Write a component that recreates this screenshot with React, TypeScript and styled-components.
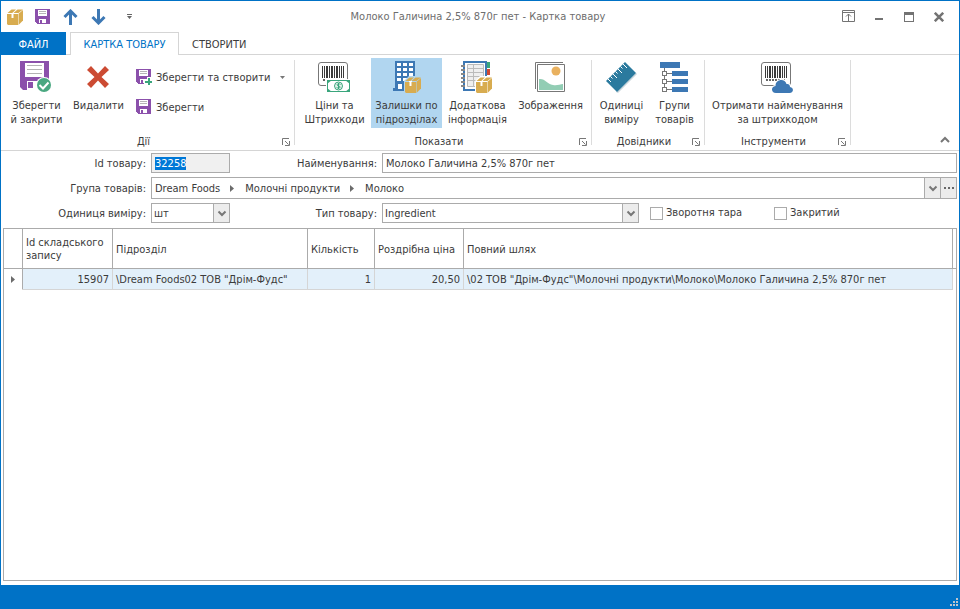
import React, { useEffect, useRef } from 'react';
import styled, { createGlobalStyle, css } from 'styled-components';

const BLUE = '#0072c6';
const LINE = '#ababab';
const SOFT = '#d5d5d5';
const INK = '#3b3b3b';

const GlobalStyle = createGlobalStyle`
  *, *::before, *::after { box-sizing: border-box; }
  body {
    margin: 0;
    background: #fff;
    color: ${INK};
    font: 11px/14px 'DejaVu Sans Condensed', 'Noto Sans', sans-serif;
  }
  button, input, select { font: inherit; color: inherit; }
`;

const Window = styled.div`
  display: flex;
  flex-direction: column;
  min-height: 100vh;
  border: 1px solid ${BLUE};
  border-bottom: 0;
`;

const PlainButton = styled.button`
  display: flex;
  align-items: center;
  justify-content: center;
  padding: 0;
  border: 0;
  background: none;
`;

/* ---------- title bar ---------- */
const TitleBar = styled.header`
  display: grid;
  grid-template-columns: 142px 1fr 146px;
  align-items: center;
  height: 31px;
`;
const QuickAccess = styled.div`
  display: flex;
  align-items: center;
  gap: 12px;
  padding-left: 6px;
`;
const QuickButton = styled(PlainButton)<{ $width?: number }>`
  width: ${p => p.$width || 16}px;
  height: 16px;
`;
const WindowTitle = styled.h1`
  margin: 0;
  font-size: 11px;
  font-weight: normal;
  text-align: center;
  white-space: nowrap;
  color: #6d6d6d;
`;
const WindowControls = styled.div`
  display: flex;
  justify-content: flex-end;
  gap: 14px;
  padding-right: 12px;
`;
const ControlButton = styled(PlainButton)`
  width: 16px;
  height: 16px;
`;

/* ---------- tabs ---------- */
const TabBar = styled.nav`
  display: flex;
  height: 23px;
  box-shadow: inset 0 -1px ${SOFT};
`;
const Tab = styled.button<{ $kind?: 'file' | 'active' }>`
  height: 23px;
  padding: 1px 12px 0;
  border: 1px solid transparent;
  border-bottom: 0;
  background: none;
  white-space: nowrap;
  ${p => p.$kind === 'file' && css`
    width: 65px;
    margin-right: 4px;
    background: ${BLUE};
    color: #fff;
  `}
  ${p => p.$kind === 'active' && css`
    width: 109px;
    padding: 1px 0 0;
    background: #fff;
    border-color: ${SOFT};
    color: ${BLUE};
  `}
`;

/* ---------- ribbon ---------- */
const Ribbon = styled.section`
  display: flex;
  height: 96px;
  border-bottom: 1px solid ${SOFT};
`;
const Group = styled.div<{ $width: number }>`
  display: flex;
  flex-direction: column;
  width: ${p => p.$width}px;
  padding-top: 3px;
  background: linear-gradient(#dcdcdc, #dcdcdc) right 5px / 1px 85px no-repeat;
`;
const GroupBody = styled.div`
  display: flex;
  flex: 1;
  gap: 1px;
  padding: 0 4px;
`;
const GroupFooter = styled.div`
  display: flex;
  align-items: center;
  height: 17px;
  padding: 0 5px 0 4px;
`;
const GroupCaption = styled.span`
  flex: 1;
  text-align: center;
`;
const Launcher = styled(PlainButton)`
  width: 8px;
  height: 8px;
`;
const LargeButton = styled.button<{ $width: number; $checked?: boolean }>`
  display: flex;
  flex-direction: column;
  align-items: center;
  width: ${p => p.$width}px;
  height: 70px;
  padding: 3px 0 0;
  gap: 6px;
  border: 0;
  background: ${p => (p.$checked ? '#b1d6f0' : 'none')};
  text-align: center;
  white-space: pre;
  svg { margin-right: 1px; }
`;
const SmallColumn = styled.div`
  display: flex;
  flex-direction: column;
  gap: 14px;
  padding: 11px 0 0 7px;
`;
const SmallButton = styled(PlainButton)`
  justify-content: flex-start;
  gap: 4px;
  height: 16px;
  white-space: nowrap;
`;
const SmallText = styled.span`
  padding-top: 2px;
`;
const SplitRow = styled.div`
  display: flex;
  gap: 10px;
`;
const CollapseButton = styled(PlainButton)`
  align-self: flex-end;
  width: 12px;
  height: 8px;
  margin: 0 8px 7px auto;
`;

/* ---------- form ---------- */
const Form = styled.form`
  display: flex;
  flex-direction: column;
  gap: 4px;
  padding: 2px 2px 5px 2px;
`;
const FormRow = styled.div`
  display: flex;
  align-items: center;
`;
const FieldLabel = styled.label<{ $width: number }>`
  width: ${p => p.$width}px;
  padding: 2px 5px 0 0;
  text-align: right;
  white-space: nowrap;
`;
const frame = css`
  height: 20px;
  border: 1px solid ${LINE};
  border-radius: 0;
  background: #fff;
  outline: none;
`;
const TextField = styled.input<{ $width?: number }>`
  ${frame}
  flex: ${p => (p.$width ? `0 0 ${p.$width}px` : 1)};
  width: ${p => (p.$width ? `${p.$width}px` : 'auto')};
  min-width: 0;
  padding: 0 3px;
  &:read-only { background: #f0f0f0; }
  &::selection { background: #0078d7; color: #fff; }
`;
const Combo = styled.div<{ $width: number }>`
  ${frame}
  display: grid;
  grid-template-columns: 1fr 16px;
  width: ${p => p.$width}px;
`;
const ComboSelect = styled.select`
  grid-area: 1 / 1 / 2 / 3;
  width: 100%;
  min-width: 0;
  padding: 1px 18px 0 2px;
  border: 0;
  appearance: none;
  background: none;
  outline: none;
`;
const ComboArrow = styled.span`
  grid-area: 1 / 2;
  display: flex;
  align-items: center;
  justify-content: center;
  border-left: 1px solid ${LINE};
  background: #ececec;
  pointer-events: none;
`;
const PathField = styled.div`
  ${frame}
  display: flex;
  flex: 1;
  height: 22px;
`;
const Crumbs = styled.div`
  display: flex;
  flex: 1;
  align-items: center;
  gap: 10px;
  padding-left: 3px;
`;
const Crumb = styled(PlainButton)`
  padding-top: 1px;
`;
const FieldButton = styled(PlainButton)`
  width: 16px;
  border-left: 1px solid ${LINE};
  background: #ececec;
`;
const CheckLabel = styled.label`
  display: flex;
  align-items: center;
  gap: 3px;
  width: 124px;
  white-space: nowrap;
`;
const CheckBox = styled.input`
  width: 13px;
  height: 13px;
  margin: 0;
  border: 1px solid ${LINE};
  appearance: none;
  background: #fff;
`;
const Checks = styled.div`
  display: flex;
  padding-left: 11px;
`;

/* ---------- grid ---------- */
const GridFrame = styled.main`
  flex: 1;
  margin: 0 2px 4px;
  padding-right: 3px;
  border: 1px solid ${LINE};
  background: linear-gradient(${LINE}, ${LINE}) 0 39px / 100% 1px no-repeat;
`;
const Table = styled.table`
  width: 100%;
  table-layout: fixed;
  border-spacing: 0;
`;
const Head = styled.th`
  height: 40px;
  padding: 1px 3px 0;
  border: solid ${LINE};
  border-width: 0 1px 1px 0;
  font-weight: normal;
  line-height: 13px;
  text-align: left;
`;
const Cell = styled.td<{ $align?: string; $marker?: boolean }>`
  height: 21px;
  padding: 2px 3px 0;
  overflow: hidden;
  border: solid ${SOFT};
  border-width: 0 1px 1px 0;
  background: #e3f0fa;
  text-align: ${p => p.$align || 'left'};
  white-space: nowrap;
  ${p => p.$marker && css`
    padding: 0;
    background: #fff;
    border-bottom-color: #fff;
    border-right-color: ${LINE};
    text-align: center;
    svg { display: block; margin: 0 auto; }
  `}
`;

const StatusBar = styled.footer`
  display: flex;
  align-items: flex-end;
  justify-content: flex-end;
  height: 24px;
  padding: 0 1px 3px;
  background: ${BLUE};
`;

/* ---------- drawings ---------- */
const PURPLE = '#8b50ab';
const GOLD = '#d8ac50';
const STEEL = '#3d78b4';
const GREEN = '#3aa57c';

const FloppyShape = () => (
  <g>
    <path fill={PURPLE} d="M0 0h15v15h-13l-2-2z" />
    <path fill="#fff" d="M3 0h9v7h-9zM4 10h7v4h-7z" />
    <path fill={PURPLE} d="M3 0h9v1h-9zM5 11h2v3h-2z" />
    <path fill="#b5b5b5" d="M4 2h7v1h-7zM4 4h7v1h-7z" />
  </g>
);
const Floppy = () => (
  <svg width="16" height="16" viewBox="0 0 16 16" shapeRendering="crispEdges"><FloppyShape /></svg>
);
const FloppyAdd = () => (
  <svg width="16" height="16" viewBox="0 0 16 16" shapeRendering="crispEdges">
    <FloppyShape />
    <path fill="#fff" d="M11 8h4v3h1v5h-8v-5h3z" />
    <path fill={GREEN} d="M12 9h2v3h2v2h-2v2h-2v-2h-3v-2h3z" />
  </svg>
);
const FloppyLarge = () => (
  <svg width="32" height="32" viewBox="0 0 32 32">
    <path fill={PURPLE} d="M0 0h29v29h-26l-3-3z" />
    <path fill="#fff" d="M5 2h19v14h-19zM7 20h16v9h-16z" />
    <path fill={PURPLE} d="M8 21h5v6h-5z" />
    <path stroke="#b3b3b3" d="M7 4.500h15M7 8.500h15M7 12.500h15" />
    <circle cx="24" cy="24" r="8" fill="#fff" />
    <circle cx="24" cy="24" r="7" fill="#4aa881" />
    <path fill="none" stroke="#fff" strokeWidth="2" d="M19.500 24l3.500 3.500 5.500-6" />
  </svg>
);
const BoxShape = () => (
  <g fill={GOLD}>
    <path d="M0 5h4.500v4h2V5H11v11H1l-1-1z" />
    <path d="M.5 4l4-3.500H9L5.200 4zM6.500 4l4-3.500H16L11.500 4z" />
    <path d="M11.500 4.800L16 1v10.500L11.500 16z" />
  </g>
);
const Box = () => (
  <svg width="16" height="16" viewBox="0 0 16 16"><BoxShape /></svg>
);
const Arrow = ({ down }: { down?: boolean }) => (
  <svg width="16" height="16" viewBox="0 0 16 16">
    <path
      fill="none" stroke={STEEL} strokeWidth="3"
      d={down ? 'M7.500 0v14M1.500 8l6 6 6-6' : 'M7.500 16V2M1.500 8l6-6 6 6'}
    />
  </svg>
);
const Customize = () => (
  <svg width="6" height="6" viewBox="0 0 6 6"><path fill="#666" d="M0 0h5v1H0zM0 2h5L2.500 5z" /></svg>
);
const RibbonDisplay = () => (
  <svg width="14" height="13" viewBox="0 0 14 13">
    <path fill="none" stroke="#737373" d="M.5.5h12v11H.5zM1 2.500h12M6.500 11V4M4 6.500L6.500 4 9 6.500" />
  </svg>
);
const Minimize = () => (
  <svg width="8" height="10" viewBox="0 0 8 10"><path fill="#737373" d="M0 6h8v2H0z" /></svg>
);
const Maximize = () => (
  <svg width="10" height="10" viewBox="0 0 10 10">
    <path fill="#737373" fillRule="evenodd" d="M0 0h10v10H0zM1 3v6h8V3z" />
  </svg>
);
const Close = () => (
  <svg width="10" height="10" viewBox="0 0 10 10"><path stroke="#737373" strokeWidth="2.500" d="M.8.8l8.400 8.400M9.200.8L.8 9.200" /></svg>
);
const Delete = () => (
  <svg width="32" height="32" viewBox="0 0 32 32">
    <path fill="#cc4b33" d="M5 9l4-4 7 7.500L23 5l4 4-7.500 7L27 23l-4 4-7-7.500L9 27l-4-4 7.500-7z" />
  </svg>
);
const BARS = [
  [0, 1], [2, 1], [4, 2], [7, 1], [9, 2], [12, 1], [14, 2], [17, 1], [19, 1], [21, 1],
];
const BarcodeShape = () => (
  <g>
    <rect x=".5" y="1.500" width="29" height="23" rx="2.500" fill="#fff" stroke="#777" />
    {BARS.map(([x, w]) => <path key={x} fill="#3a3a3a" d={`M${x + 4} 5h${w}v12h-${w}z`} />)}
    <path stroke="#666" strokeWidth="2" strokeDasharray="2 1" d="M5 19h19" />
  </g>
);
const PriceBarcode = () => (
  <svg width="32" height="32" viewBox="0 0 32 32">
    <BarcodeShape />
    <path fill="#fff" d="M8 18h24v14H8z" />
    <rect x="9.500" y="19.500" width="22" height="11" fill="#fff" stroke={GREEN} />
    <path fill={GREEN} d="M9 19h5l-5 4zM32 19h-5l5 4zM9 31h5l-5-4zM32 31h-5l5-4z" />
    <circle cx="20.500" cy="25" r="4" fill="#e6f5ee" stroke={GREEN} />
    <path fill="none" stroke={GREEN} d="M22.500 23.500c-1-1-3.500-.8-3.500.3 0 1.500 3.200.9 3.200 2.300 0 1.200-2.500 1.300-3.700.3M20.500 22v6" />
  </svg>
);
const CloudBarcode = () => (
  <svg width="32" height="32" viewBox="0 0 32 32">
    <BarcodeShape />
    <path
      fill={STEEL} stroke="#fff" strokeWidth="2" paintOrder="stroke"
      d="M15 32c-5 0-5.500-6.500-.5-7 0-7 9.500-8 11-2 3 0 3.500 1.500 3.500 3 4 .5 4 6-.5 6z"
    />
  </svg>
);
const Building = () => (
  <svg width="32" height="32" viewBox="0 0 32 32">
    <path fill={STEEL} d="M5 0h20v27h2v3H3v-3h2z" />
    {[2, 7, 12, 17].map(y => (
      <path key={y} fill="#fff" d={`M7 ${y}h4v3H7zM13 ${y}h4v3h-4zM19 ${y}h4v3h-4z`} />
    ))}
    <path fill="#fff" d="M8 23h4v5H8z" />
    <path fill="#b1d6f0" d="M14 20l5-5h13v17H14z" />
    <g transform="translate(15 16)"><path fill="#fff" d="M4 4h3v6H4z" /><BoxShape /></g>
  </svg>
);
const Notebook = () => (
  <svg width="32" height="32" viewBox="0 0 32 32">
    <path fill={GREEN} d="M26 1h3v6h-3z" />
    <path fill="#d04a33" d="M26 8h3v6h-3z" />
    <path fill={STEEL} d="M26 15h3v6h-3z" />
    <path fill="#fff" stroke={STEEL} strokeWidth="2" d="M3 1h22v28H3z" />
    <path fill="#efefef" stroke="#bbb" d="M6.500 3.500h16v22h-16zM7 7.500h16M7 11.500h16M7 15.500h16M7 19.500h16M12.500 3v22" />
    <path stroke="#fff" strokeWidth="3" strokeDasharray="2 2" d="M2.500 4v24" />
    <path stroke="#888" strokeWidth="4" strokeDasharray="2 2" d="M2 4v24" />
    <path fill="#fff" d="M14 20l5-5h13v17H14z" />
    <g transform="translate(15 16)"><BoxShape /></g>
  </svg>
);
const Picture = () => (
  <svg width="32" height="32" viewBox="0 0 32 32">
    <path fill="none" stroke="#777" d="M1.500 28V1.500H29M3.500 3.500h27v27h-27z" />
    <circle cx="22" cy="10" r="4.500" fill="#e9b15f" />
    <path fill="#92cdb4" d="M5 18c6-1 8 5 14 6 4 1 7-1 10-1v6H5z" />
  </svg>
);
const Ruler = () => (
  <svg width="32" height="32" viewBox="0 0 32 32">
    <path fill="#c9d5db" d="M13 32L32 13l-1-1L11 31z" />
    <path fill="#2b7a9e" d="M1 20L20 1l11 11-19 19z" />
    <path stroke="#fff" d="M3 18l3 3M5.500 15.500l2 2M8 13l4 4M10.500 10.500l2 2M13 8l4 4M15.500 5.500l2 2M18 3l4 4" />
  </svg>
);
const Tree = () => (
  <svg width="32" height="32" viewBox="0 -1 32 32" shapeRendering="crispEdges">
    <path fill={STEEL} d="M2 0h20v6H2zM14 9h16v5H14zM14 17h16v5H14zM14 25h16v5H14z" />
    <path fill="none" stroke="#777" d="M6.500 6v22M9 11.500h5M9 19.500h5M9 27.500h5" />
    <path fill="#fff" stroke="#777" d="M4.500 9.500h4v4h-4zM4.500 17.500h4v4h-4zM4.500 25.500h4v4h-4z" />
  </svg>
);
const LauncherIcon = () => (
  <svg width="8" height="8" viewBox="0 0 8 8">
    <path fill="none" stroke="#777" d="M.5 7V.5H7M3 3l3.500 3.500M7.500 3v4.500H3" />
  </svg>
);
const Caret = () => (
  <svg width="5" height="3" viewBox="0 0 5 3"><path fill="#777" d="M0 0h5L2.500 3z" /></svg>
);
const Chevron = ({ up }: { up?: boolean }) => (
  <svg width="10" height="7" viewBox="0 0 10 7">
    <path fill="none" stroke="#777" strokeWidth="2" d={up ? 'M1 6l4-4 4 4' : 'M1.500 1.500L5 5l3.500-3.500'} />
  </svg>
);
const RightMark = () => (
  <svg width="5" height="7" viewBox="0 0 5 7"><path fill="#6b6b6b" d="M0 0l4 3.500L0 7z" /></svg>
);
const Dots = () => (
  <svg width="10" height="2" viewBox="0 0 10 2"><path fill="#666" d="M0 0h2v2H0zM4 0h2v2H4zM8 0h2v2H8z" /></svg>
);
const Grip = () => (
  <svg width="8" height="8" viewBox="0 0 8 8">
    <path fill="#bfc5cc" d="M6 0h2v2H6zM3 3h2v2H3zM6 3h2v2H6zM0 6h2v2H0zM3 6h2v2H3zM6 6h2v2H6z" />
  </svg>
);

type GroupProps = { title: string; width: number; children: React.ReactNode };
const RibbonGroup = ({ title, width, children }: GroupProps) => (
  <Group $width={width}>
    <GroupBody>{children}</GroupBody>
    <GroupFooter>
      <GroupCaption>{title}</GroupCaption>
      <Launcher aria-label={title}><LauncherIcon /></Launcher>
    </GroupFooter>
  </Group>
);

type LargeProps = { icon: React.ReactNode; text: string; width: number; checked?: boolean };
const Large = ({ icon, text, width, checked }: LargeProps) => (
  <LargeButton $width={width} $checked={checked}>
    {icon}
    <span>{text}</span>
  </LargeButton>
);

type ComboProps = { id: string; value: string; width: number };
const ComboBox = ({ id, value, width }: ComboProps) => (
  <Combo $width={width}>
    <ComboSelect id={id} defaultValue={value}><option>{value}</option></ComboSelect>
    <ComboArrow><Chevron /></ComboArrow>
  </Combo>
);

export default function App() {
  const idField = useRef<HTMLInputElement>(null);
  useEffect(() => {
    idField.current?.focus();
    idField.current?.select();
  }, []);

  return (
    <Window>
      <GlobalStyle />
      <TitleBar>
        <QuickAccess>
          <Box />
          <QuickButton aria-label="Зберегти"><Floppy /></QuickButton>
          <QuickButton aria-label="Вгору"><Arrow /></QuickButton>
          <QuickButton aria-label="Вниз"><Arrow down /></QuickButton>
          <QuickButton $width={22} aria-label="Налаштувати"><Customize /></QuickButton>
        </QuickAccess>
        <WindowTitle>Молоко Галичина 2,5% 870г пет - Картка товару</WindowTitle>
        <WindowControls>
          <ControlButton aria-label="Стрічка"><RibbonDisplay /></ControlButton>
          <ControlButton aria-label="Згорнути"><Minimize /></ControlButton>
          <ControlButton aria-label="Розгорнути"><Maximize /></ControlButton>
          <ControlButton aria-label="Закрити"><Close /></ControlButton>
        </WindowControls>
      </TitleBar>

      <TabBar>
        <Tab $kind="file">ФАЙЛ</Tab>
        <Tab $kind="active">КАРТКА ТОВАРУ</Tab>
        <Tab>СТВОРИТИ</Tab>
      </TabBar>

      <Ribbon>
        <RibbonGroup title="Дії" width={294}>
          <Large width={63} icon={<FloppyLarge />} text={'Зберегти\nй закрити'} />
          <Large width={59} icon={<Delete />} text="Видалити" />
          <SmallColumn>
            <SplitRow>
              <SmallButton><FloppyAdd /><SmallText>Зберегти та створити</SmallText></SmallButton>
              <PlainButton aria-label="Інші дії"><Caret /></PlainButton>
            </SplitRow>
            <SmallButton><Floppy /><SmallText>Зберегти</SmallText></SmallButton>
          </SmallColumn>
        </RibbonGroup>
        <RibbonGroup title="Показати" width={297}>
          <Large width={71} icon={<PriceBarcode />} text={'Ціни та\nШтрихкоди'} />
          <Large width={71} checked icon={<Building />} text={'Залишки по\nпідрозділах'} />
          <Large width={69} icon={<Notebook />} text={'Додаткова\nінформація'} />
          <Large width={75} icon={<Picture />} text="Зображення" />
        </RibbonGroup>
        <RibbonGroup title="Довідники" width={113}>
          <Large width={51} icon={<Ruler />} text={'Одиниці\nвиміру'} />
          <Large width={53} icon={<Tree />} text={'Групи\nтоварів'} />
        </RibbonGroup>
        <RibbonGroup title="Інструменти" width={146}>
          <Large width={137} icon={<CloudBarcode />} text={'Отримати найменування\nза штрихкодом'} />
        </RibbonGroup>
        <CollapseButton aria-label="Згорнути стрічку"><Chevron up /></CollapseButton>
      </Ribbon>

      <Form>
        <FormRow>
          <FieldLabel $width={148} htmlFor="item-id">Id товару:</FieldLabel>
          <TextField $width={79} id="item-id" ref={idField} readOnly defaultValue="32258" />
          <FieldLabel $width={152} htmlFor="item-name">Найменування:</FieldLabel>
          <TextField id="item-name" defaultValue="Молоко Галичина 2,5% 870г пет" />
        </FormRow>
        <FormRow>
          <FieldLabel as="span" $width={148}>Група товарів:</FieldLabel>
          <PathField>
            <Crumbs>
              <Crumb type="button">Dream Foods</Crumb>
              <RightMark />
              <Crumb type="button">Молочні продукти</Crumb>
              <RightMark />
              <Crumb type="button">Молоко</Crumb>
            </Crumbs>
            <FieldButton type="button" aria-label="Відкрити список"><Chevron /></FieldButton>
            <FieldButton type="button" aria-label="Вибрати"><Dots /></FieldButton>
          </PathField>
        </FormRow>
        <FormRow>
          <FieldLabel $width={148} htmlFor="unit">Одиниця виміру:</FieldLabel>
          <ComboBox id="unit" value="шт" width={79} />
          <FieldLabel $width={152} htmlFor="kind">Тип товару:</FieldLabel>
          <ComboBox id="kind" value="Ingredient" width={257} />
          <Checks>
            <CheckLabel><CheckBox type="checkbox" />Зворотня тара</CheckLabel>
            <CheckLabel><CheckBox type="checkbox" />Закритий</CheckLabel>
          </Checks>
        </FormRow>
      </Form>

      <GridFrame>
        <Table>
          <colgroup>
            <col width="19" /><col width="90" /><col width="195" /><col width="67" /><col width="89" /><col />
          </colgroup>
          <thead>
            <tr>
              <Head aria-label="Позначка" />
              <Head>Id складського запису</Head>
              <Head>Підрозділ</Head>
              <Head>Кількість</Head>
              <Head>Роздрібна ціна</Head>
              <Head>Повний шлях</Head>
            </tr>
          </thead>
          <tbody>
            <tr>
              <Cell $marker><RightMark /></Cell>
              <Cell $align="right">15907</Cell>
              <Cell>{'\\Dream Foods02 ТОВ "Дрім-Фудс"'}</Cell>
              <Cell $align="right">1</Cell>
              <Cell $align="right">20,50</Cell>
              <Cell>{'\\02 ТОВ "Дрім-Фудс"\\Молочні продукти\\Молоко\\Молоко Галичина 2,5% 870г пет'}</Cell>
            </tr>
          </tbody>
        </Table>
      </GridFrame>
      <StatusBar><Grip /></StatusBar>
    </Window>
  );
}
